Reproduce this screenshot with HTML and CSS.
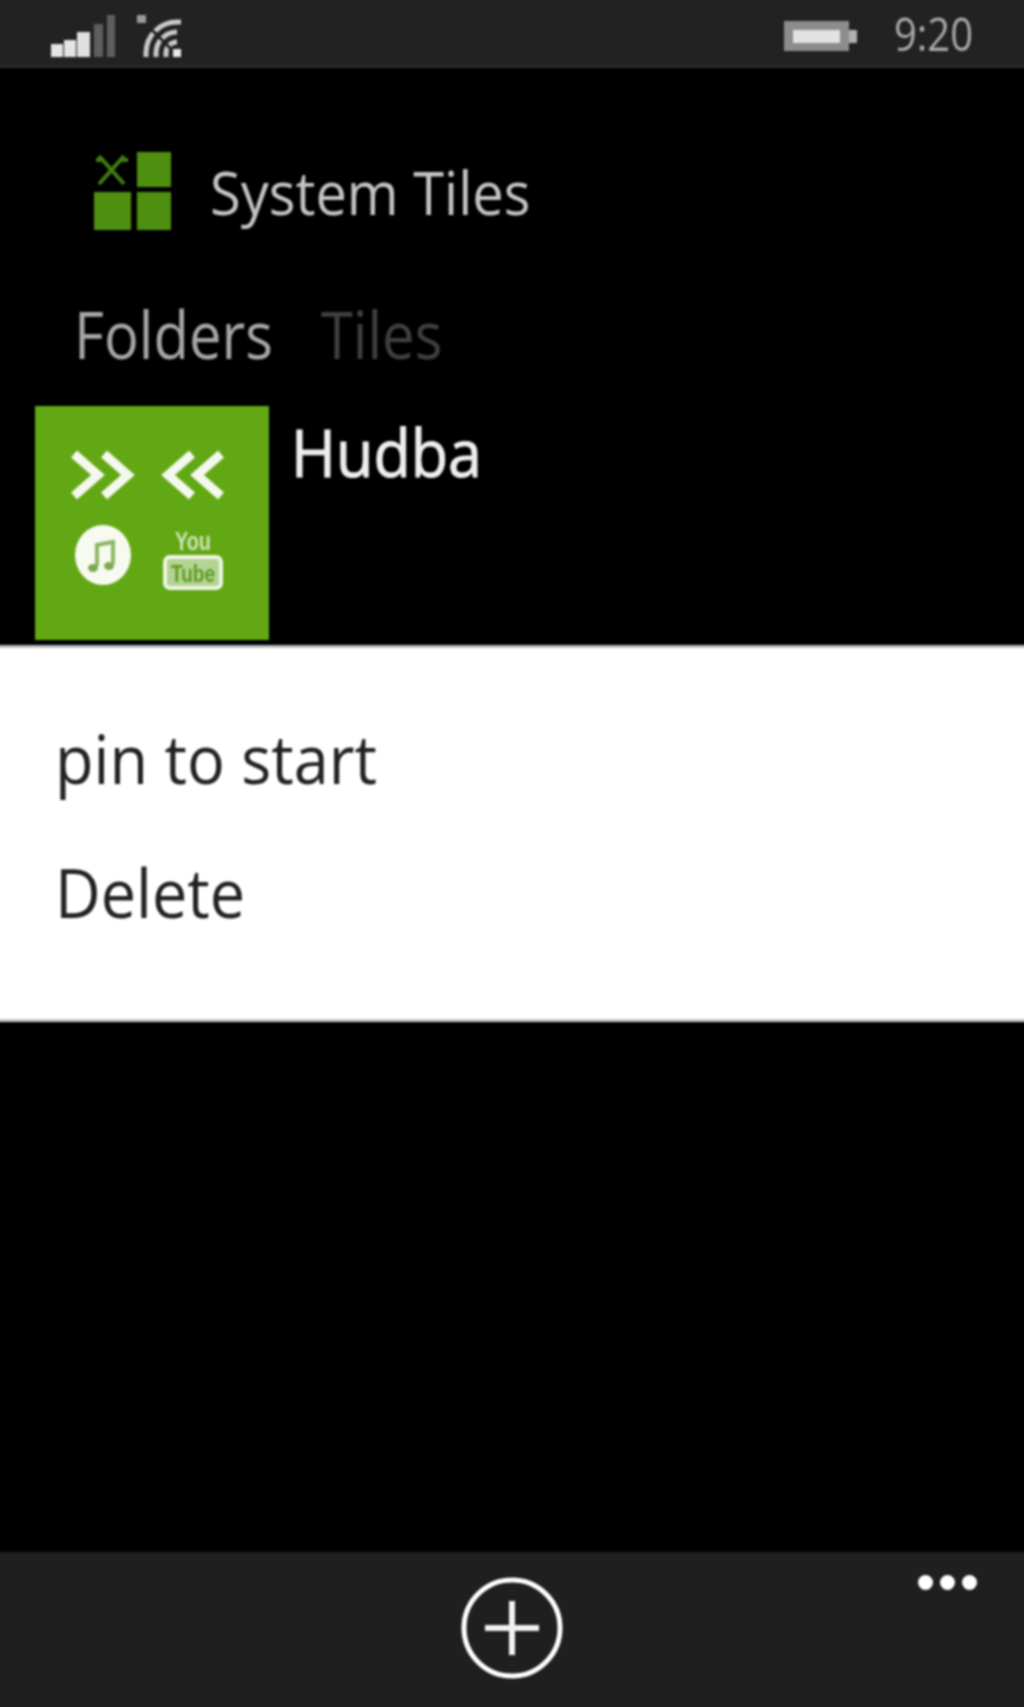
FILE: index.html
```html
<!DOCTYPE html>
<html lang="en">
<head>
    <meta charset="UTF-8">
    <meta name="viewport" content="width=device-width, initial-scale=1.0">
    <title>System Tiles</title>
    <link rel="stylesheet" href="styles.css">
</head>
<body>
    <div class="phone">
        <div class="status-bar">
            <div class="status-left">
                <svg class="signal" width="64" height="42" viewBox="0 0 64 42">
                    <rect x="0" y="29" width="12" height="13" fill="#e4e4e4"/>
                    <rect x="13" y="25" width="12" height="17" fill="#e4e4e4"/>
                    <rect x="26" y="17" width="13" height="25" fill="#e0e0e0"/>
                    <rect x="43" y="9" width="9" height="33" fill="#5e5e5e"/>
                    <rect x="56" y="0" width="8" height="42" fill="#5e5e5e"/>
                </svg>
                <svg class="wifi" width="46" height="42" viewBox="0 0 46 42">
                    <g fill="none" stroke="#c8c8c8" stroke-width="5">
                        <path d="M40 27a11 11 0 0 0 -11 11V42"/>
                        <path d="M40 17a21 21 0 0 0 -21 21V42"/>
                        <path d="M44 7H40a31 31 0 0 0 -31 31V42"/>
                    </g>
                    <path d="M4 4L34 34" stroke="#222" stroke-width="3"/>
                    <rect x="36" y="34" width="8" height="8" fill="#e8e8e8"/>
                    <rect x="0" y="0" width="9" height="8" fill="#9a9a9a"/>
                </svg>
            </div>
            <div class="status-right">
                <svg class="battery" width="73" height="30" viewBox="0 0 73 30">
                    <rect x="0" y="0" width="65" height="30" fill="#8c8c8c"/>
                    <rect x="9" y="9" width="47" height="13" fill="#e2e2e2"/>
                    <rect x="65" y="9" width="8" height="13" fill="#b0b0b0"/>
                </svg>
                <span class="time"><span class="taller">9:20</span></span>
            </div>
        </div>

        <div class="content">
            <div class="app-title">
                <svg class="logo" width="78" height="80" viewBox="0 0 78 80">
                    <path d="M5 6L30 34M30 6L5 34M2 10H10M26 10H34" fill="none" stroke="#437c10" stroke-width="4"/>
                    <rect x="43" y="2" width="34" height="35" fill="#4f8f10"/>
                    <rect x="0" y="42" width="37" height="38" fill="#4f8f10"/>
                    <rect x="43" y="42" width="34" height="38" fill="#4f8f10"/>
                </svg>
                <span class="app-name"><span class="tall">System Tiles</span></span>
            </div>

            <div class="pivot">
                <span class="pivot-item active"><span class="taller">Folders</span></span>
                <span class="pivot-item"><span class="taller">Tiles</span></span>
            </div>

            <div class="folder">
                <div class="tile">
                    <svg width="234" height="234" viewBox="0 0 234 234">
                        <g fill="none" stroke="#f4f8ee" stroke-width="9">
                            <path d="M39 48L63 69L39 90"/>
                            <path d="M69 48L93 69L69 90"/>
                            <path d="M157 48L133 69L157 90"/>
                            <path d="M186 48L162 69L186 90"/>
                        </g>
                        <ellipse cx="68" cy="149" rx="28" ry="30" fill="#f6faf0"/>
                        <path d="M62 160V139L78 136V158" fill="none" stroke="#8fb766" stroke-width="4"/>
                        <ellipse cx="58" cy="162" rx="5" ry="4" fill="#7da850"/>
                        <ellipse cx="74" cy="160" rx="5" ry="4" fill="#7da850"/>
                        <text class="yt-you" x="158" y="144" text-anchor="middle" textLength="36" lengthAdjust="spacingAndGlyphs">You</text>
                        <rect x="130" y="151" width="56" height="31" rx="5" fill="#b4d494" stroke="#eef6e4" stroke-width="4"/>
                        <text class="yt-tube" x="158" y="176" text-anchor="middle" textLength="44" lengthAdjust="spacingAndGlyphs">Tube</text>
                    </svg>
                </div>
                <span class="folder-name"><span class="tall">Hudba</span></span>
            </div>

            <div class="context-menu">
                <div class="menu-item"><span class="tall">pin to start</span></div>
                <div class="menu-item"><span class="tall">Delete</span></div>
            </div>
        </div>

        <div class="app-bar">
            <svg class="add-button" width="104" height="104" viewBox="0 0 104 104">
                <circle cx="52" cy="52" r="48" fill="none" stroke="#fff" stroke-width="5"/>
                <path d="M52 25V79M25 52H79" fill="none" stroke="#f2f2f2" stroke-width="6"/>
            </svg>
            <div class="more">
                <span class="dot"></span>
                <span class="dot"></span>
                <span class="dot"></span>
            </div>
        </div>
    </div>
</body>
</html>
```

FILE: styles.css
```css
/* Global Styles */
html, body {
    margin: 0;
    padding: 0;
    height: 100%;
    background: #000;
    overflow: hidden;
}

body {
    font-family: 'Open Sans', 'Noto Sans', sans-serif;
}

/* the shot is soft; bleed past the window so the blur doesn't fade the edges */
.phone {
    display: flex;
    flex-direction: column;
    width: 1032px;
    height: 1715px;
    margin: -4px;
    filter: blur(0.8px);
}

/* letters in the shot run taller than Open Sans */
.tall,
.taller {
    display: inline-block;
    transform: scaleY(1.08);
    transform-origin: 0 83%;
}

.taller {
    transform: scaleY(1.15);
}

/* Status Bar */
.status-bar {
    flex: 0 0 72px;
    box-sizing: border-box;
    background: #222;
    display: flex;
    justify-content: space-between;
    align-items: center;
    padding: 10px 55px 0;
    border-bottom: 3px solid #2a2a2a;
}

.status-left {
    display: flex;
    align-items: center;
    gap: 22px;
}

.status-right {
    display: flex;
    align-items: center;
    gap: 37px;
}

.time {
    font-size: 40px;
    line-height: 46px;
    color: #a8a8a8;
}

/* Content */
.content {
    flex: 1;
    background: #000;
}

.app-title {
    display: flex;
    align-items: center;
    gap: 38px;
    padding: 82px 0 0 98px;
}

.app-name {
    font-size: 56px;
    line-height: 60px;
    padding-top: 6px;
    color: #c4c4c4;
}

.pivot {
    display: flex;
    gap: 48px;
    padding: 72px 0 0 78px;
}

.pivot-item {
    font-size: 58px;
    line-height: 70px;
    color: #3f3f3f;
}

.pivot-item.active {
    color: #a6a6a6;
}

.folder {
    display: flex;
    gap: 22px;
    padding: 34px 0 0 39px;
}

.tile {
    width: 234px;
    height: 234px;
    background: #62a814;
}

.tile svg {
    display: block;
}

.yt-you {
    font-family: 'Liberation Sans', sans-serif;
    font-size: 26px;
    font-weight: bold;
    fill: #cfe3b8;
}

.yt-tube {
    font-family: 'Liberation Sans', sans-serif;
    font-size: 24px;
    font-weight: bold;
    fill: #5d9a20;
}

.folder-name {
    font-size: 61px;
    line-height: 62px;
    color: #eee;
    padding-top: 17px;
    -webkit-text-stroke: 1px #eee;
}

/* Context Menu */
.context-menu {
    margin-top: 5px;
    box-sizing: border-box;
    height: 377px;
    background: #fff;
    border-top: 3px solid #bcbcc4;
    border-bottom: 3px solid #c4c4c4;
    padding-top: 76px;
}

.menu-item {
    font-size: 63px;
    line-height: 72px;
    color: #222;
    padding: 0 0 62px 59px;
}

/* App Bar */
.app-bar {
    flex: 0 0 159px;
    background: #1f1f1f;
    position: relative;
    display: flex;
    justify-content: center;
}

.add-button {
    margin-top: 24px;
}

.more {
    position: absolute;
    top: 23px;
    right: 51px;
    display: flex;
    gap: 7px;
}

.dot {
    width: 15px;
    height: 15px;
    border-radius: 50%;
    background: #fff;
}
```
